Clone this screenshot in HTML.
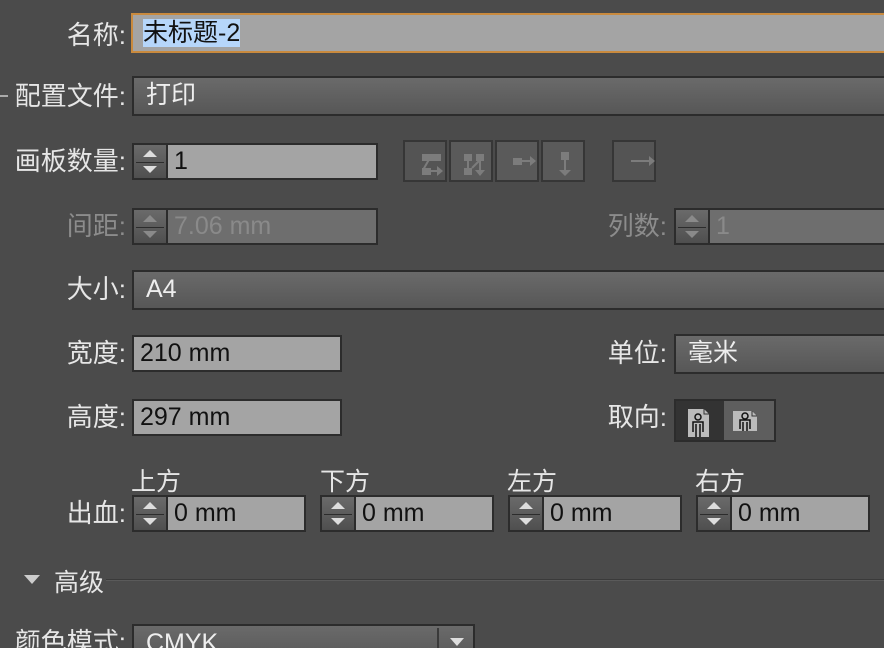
<!DOCTYPE html>
<html style="overflow:hidden"><head><meta charset="utf-8"><style>
html,body{overflow:hidden;height:648px}
body{margin:0;width:884px;background:#4b4b4b;position:relative;font-family:"Liberation Sans","Noto Sans CJK SC",sans-serif;}
.a{position:absolute}
.lbl{position:absolute;color:#e6e6e6;font-size:26px;text-align:right;width:200px;line-height:30px}
.dis{color:#8c8c8c}
.fld{position:absolute;background:#a4a4a4;border:2px solid #2c2c2c;box-sizing:border-box;color:#111;font-size:25px;line-height:32px;padding-left:6px}
.dd{position:absolute;background:linear-gradient(#6a6a6a,#575757);border:2px solid #2c2c2c;box-sizing:border-box;color:#eee;font-size:25px;line-height:34px;padding-left:12px}
.sp{position:absolute;border:2px solid #2c2c2c;box-sizing:border-box;background:#a4a4a4;font-size:25px;color:#111;line-height:32px}
.sp .b{position:absolute;left:0;top:0;bottom:0;width:32px;background:linear-gradient(#6a6a6a,#4f4f4f);border-right:2px solid #2c2c2c}
.sp .b:after{content:"";position:absolute;left:2px;right:2px;top:50%;border-top:1px solid #2c2c2c}
.sp .u{position:absolute;left:9px;top:5px;border:7px solid transparent;border-bottom:7px solid #ddd;border-top:0}
.sp .d{position:absolute;left:9px;bottom:5px;border:7px solid transparent;border-top:7px solid #ddd;border-bottom:0}
.sp .t{position:absolute;left:40px;top:0}
.sp.x{background:#6e6e6e;color:#8a8a8a}
.sp.x .u{border-bottom-color:#8a8a8a}.sp.x .d{border-top-color:#8a8a8a}
.ib{position:absolute;top:140px;width:44px;height:42px;border:2px solid #363636;box-sizing:border-box;background:#545454}
.hd{position:absolute;color:#e6e6e6;font-size:25px}
</style></head><body>
<div class="a" style="left:0;top:95px;width:8px;height:2px;background:#aaa"></div>

<div class="lbl" style="left:-74px;top:20px">名称:</div>
<div class="fld" style="left:131px;top:13px;width:760px;height:40px;border-color:#c98a3e;line-height:36px;padding-left:10px"><span style="background:#b6d6fa">未标题-2</span></div>

<div class="lbl" style="left:-74px;top:81px">配置文件:</div>
<div class="dd" style="left:132px;top:76px;width:760px;height:40px">打印</div>

<div class="lbl" style="left:-74px;top:146px">画板数量:</div>
<div class="sp" style="left:132px;top:143px;width:246px;height:37px"><div class="b"><i class="u"></i><i class="d"></i></div><span class="t">1</span></div>
<div class="ib" style="left:403px"></div><div class="ib" style="left:449px;background:#5a5a5a"></div><div class="ib" style="left:495px;background:#5a5a5a"></div><div class="ib" style="left:541px;background:#5a5a5a"></div>
<div class="ib" style="left:612px;width:44px"></div>
<svg class="a" style="left:403px;top:140px" width="260" height="44" fill="#7c7c7c" stroke="#7c7c7c" stroke-width="2">
<rect x="19" y="14" width="9" height="7" stroke="none"/><rect x="28" y="14" width="10" height="7" stroke="none"/><rect x="19" y="28" width="9" height="7" stroke="none"/><path d="M28 16 L20 30 M27 31h8" fill="none"/><path d="M34 26l6 5-6 5z" stroke="none"/>
<rect x="61" y="14" width="8" height="7" stroke="none"/><rect x="73" y="14" width="8" height="7" stroke="none"/><rect x="61" y="28" width="8" height="7" stroke="none"/><path d="M65 21v7 M77 21v10 M69 28l8-8" fill="none"/><path d="M72 30h10l-5 6z" stroke="none"/>
<rect x="110" y="18" width="9" height="7" stroke="none"/><path d="M119 21h10" fill="none"/><path d="M127 16l6 5-6 5z" stroke="none"/>
<rect x="158" y="12" width="8" height="8" stroke="none"/><path d="M162 20v10" fill="none"/><path d="M156 30h12l-6 6z" stroke="none"/>
<path d="M228 21h20" fill="none"/><path d="M246 16l6 5-6 5z" stroke="none"/>
</svg>

<div class="lbl dis" style="left:-74px;top:211px">间距:</div>
<div class="sp x" style="left:132px;top:208px;width:246px;height:37px"><div class="b"><i class="u"></i><i class="d"></i></div><span class="t">7.06 mm</span></div>
<div class="lbl dis" style="left:467px;top:211px">列数:</div>
<div class="sp x" style="left:674px;top:208px;width:220px;height:37px"><div class="b"><i class="u"></i><i class="d"></i></div><span class="t">1</span></div>

<div class="lbl" style="left:-74px;top:274px">大小:</div>
<div class="dd" style="left:132px;top:270px;width:760px;height:40px">A4</div>

<div class="lbl" style="left:-74px;top:338px">宽度:</div>
<div class="fld" style="left:132px;top:335px;width:210px;height:37px">210 mm</div>
<div class="lbl" style="left:467px;top:338px">单位:</div>
<div class="dd" style="left:674px;top:334px;width:220px;height:40px">毫米</div>

<div class="lbl" style="left:-74px;top:402px">高度:</div>
<div class="fld" style="left:132px;top:399px;width:210px;height:37px">297 mm</div>
<div class="lbl" style="left:467px;top:402px">取向:</div>
<div class="a" style="left:674px;top:399px;width:102px;height:43px;border:2px solid #2c2c2c;box-sizing:border-box;background:#5e5e5e"><div style="width:48px;height:39px;background:#333"></div></div>
<svg class="a" style="left:674px;top:399px" width="102" height="43">
<path d="M14 10h16l5 5v23H14z" fill="#bbb"/><path d="M30 10v5h5" fill="none" stroke="#333"/>
<circle cx="24" cy="18" r="3" fill="none" stroke="#111" stroke-width="1.5"/><path d="M19 33V23h10v10M22 38V25M26 38V25" fill="none" stroke="#111" stroke-width="1.5"/>
<path d="M59 12h19l5 5v15H59z" fill="#bbb"/><path d="M78 12v5h5" fill="none" stroke="#333"/>
<circle cx="71" cy="17" r="3" fill="none" stroke="#111" stroke-width="1.5"/><path d="M66 30V21h10v9M69 32V23M73 32V23" fill="none" stroke="#111" stroke-width="1.5"/>
</svg>

<div class="hd" style="left:131px;top:462px">上方</div>
<div class="hd" style="left:320px;top:462px">下方</div>
<div class="hd" style="left:507px;top:462px">左方</div>
<div class="hd" style="left:695px;top:462px">右方</div>
<div class="lbl" style="left:-74px;top:498px">出血:</div>
<div class="sp" style="left:132px;top:495px;width:174px;height:37px"><div class="b"><i class="u"></i><i class="d"></i></div><span class="t">0 mm</span></div>
<div class="sp" style="left:320px;top:495px;width:174px;height:37px"><div class="b"><i class="u"></i><i class="d"></i></div><span class="t">0 mm</span></div>
<div class="sp" style="left:508px;top:495px;width:174px;height:37px"><div class="b"><i class="u"></i><i class="d"></i></div><span class="t">0 mm</span></div>
<div class="sp" style="left:696px;top:495px;width:174px;height:37px"><div class="b"><i class="u"></i><i class="d"></i></div><span class="t">0 mm</span></div>

<div class="a" style="left:24px;top:575px;border:8px solid transparent;border-top:9px solid #ccc;border-bottom:0"></div>
<div class="hd" style="left:54px;top:563px">高级</div>
<div class="a" style="left:106px;top:579px;width:780px;height:1px;background:#3a3a3a"></div>
<div class="a" style="left:106px;top:580px;width:780px;height:1px;background:#5a5a5a"></div>

<div class="lbl" style="left:-74px;top:627px">颜色模式:</div>
<div class="dd" style="left:132px;top:624px;width:343px;height:40px">CMYK</div>
<div class="a" style="left:437px;top:628px;width:2px;height:30px;background:#3a3a3a"></div>
<div class="a" style="left:450px;top:638px;border:7px solid transparent;border-top:8px solid #ddd;border-bottom:0"></div>
</body></html>
